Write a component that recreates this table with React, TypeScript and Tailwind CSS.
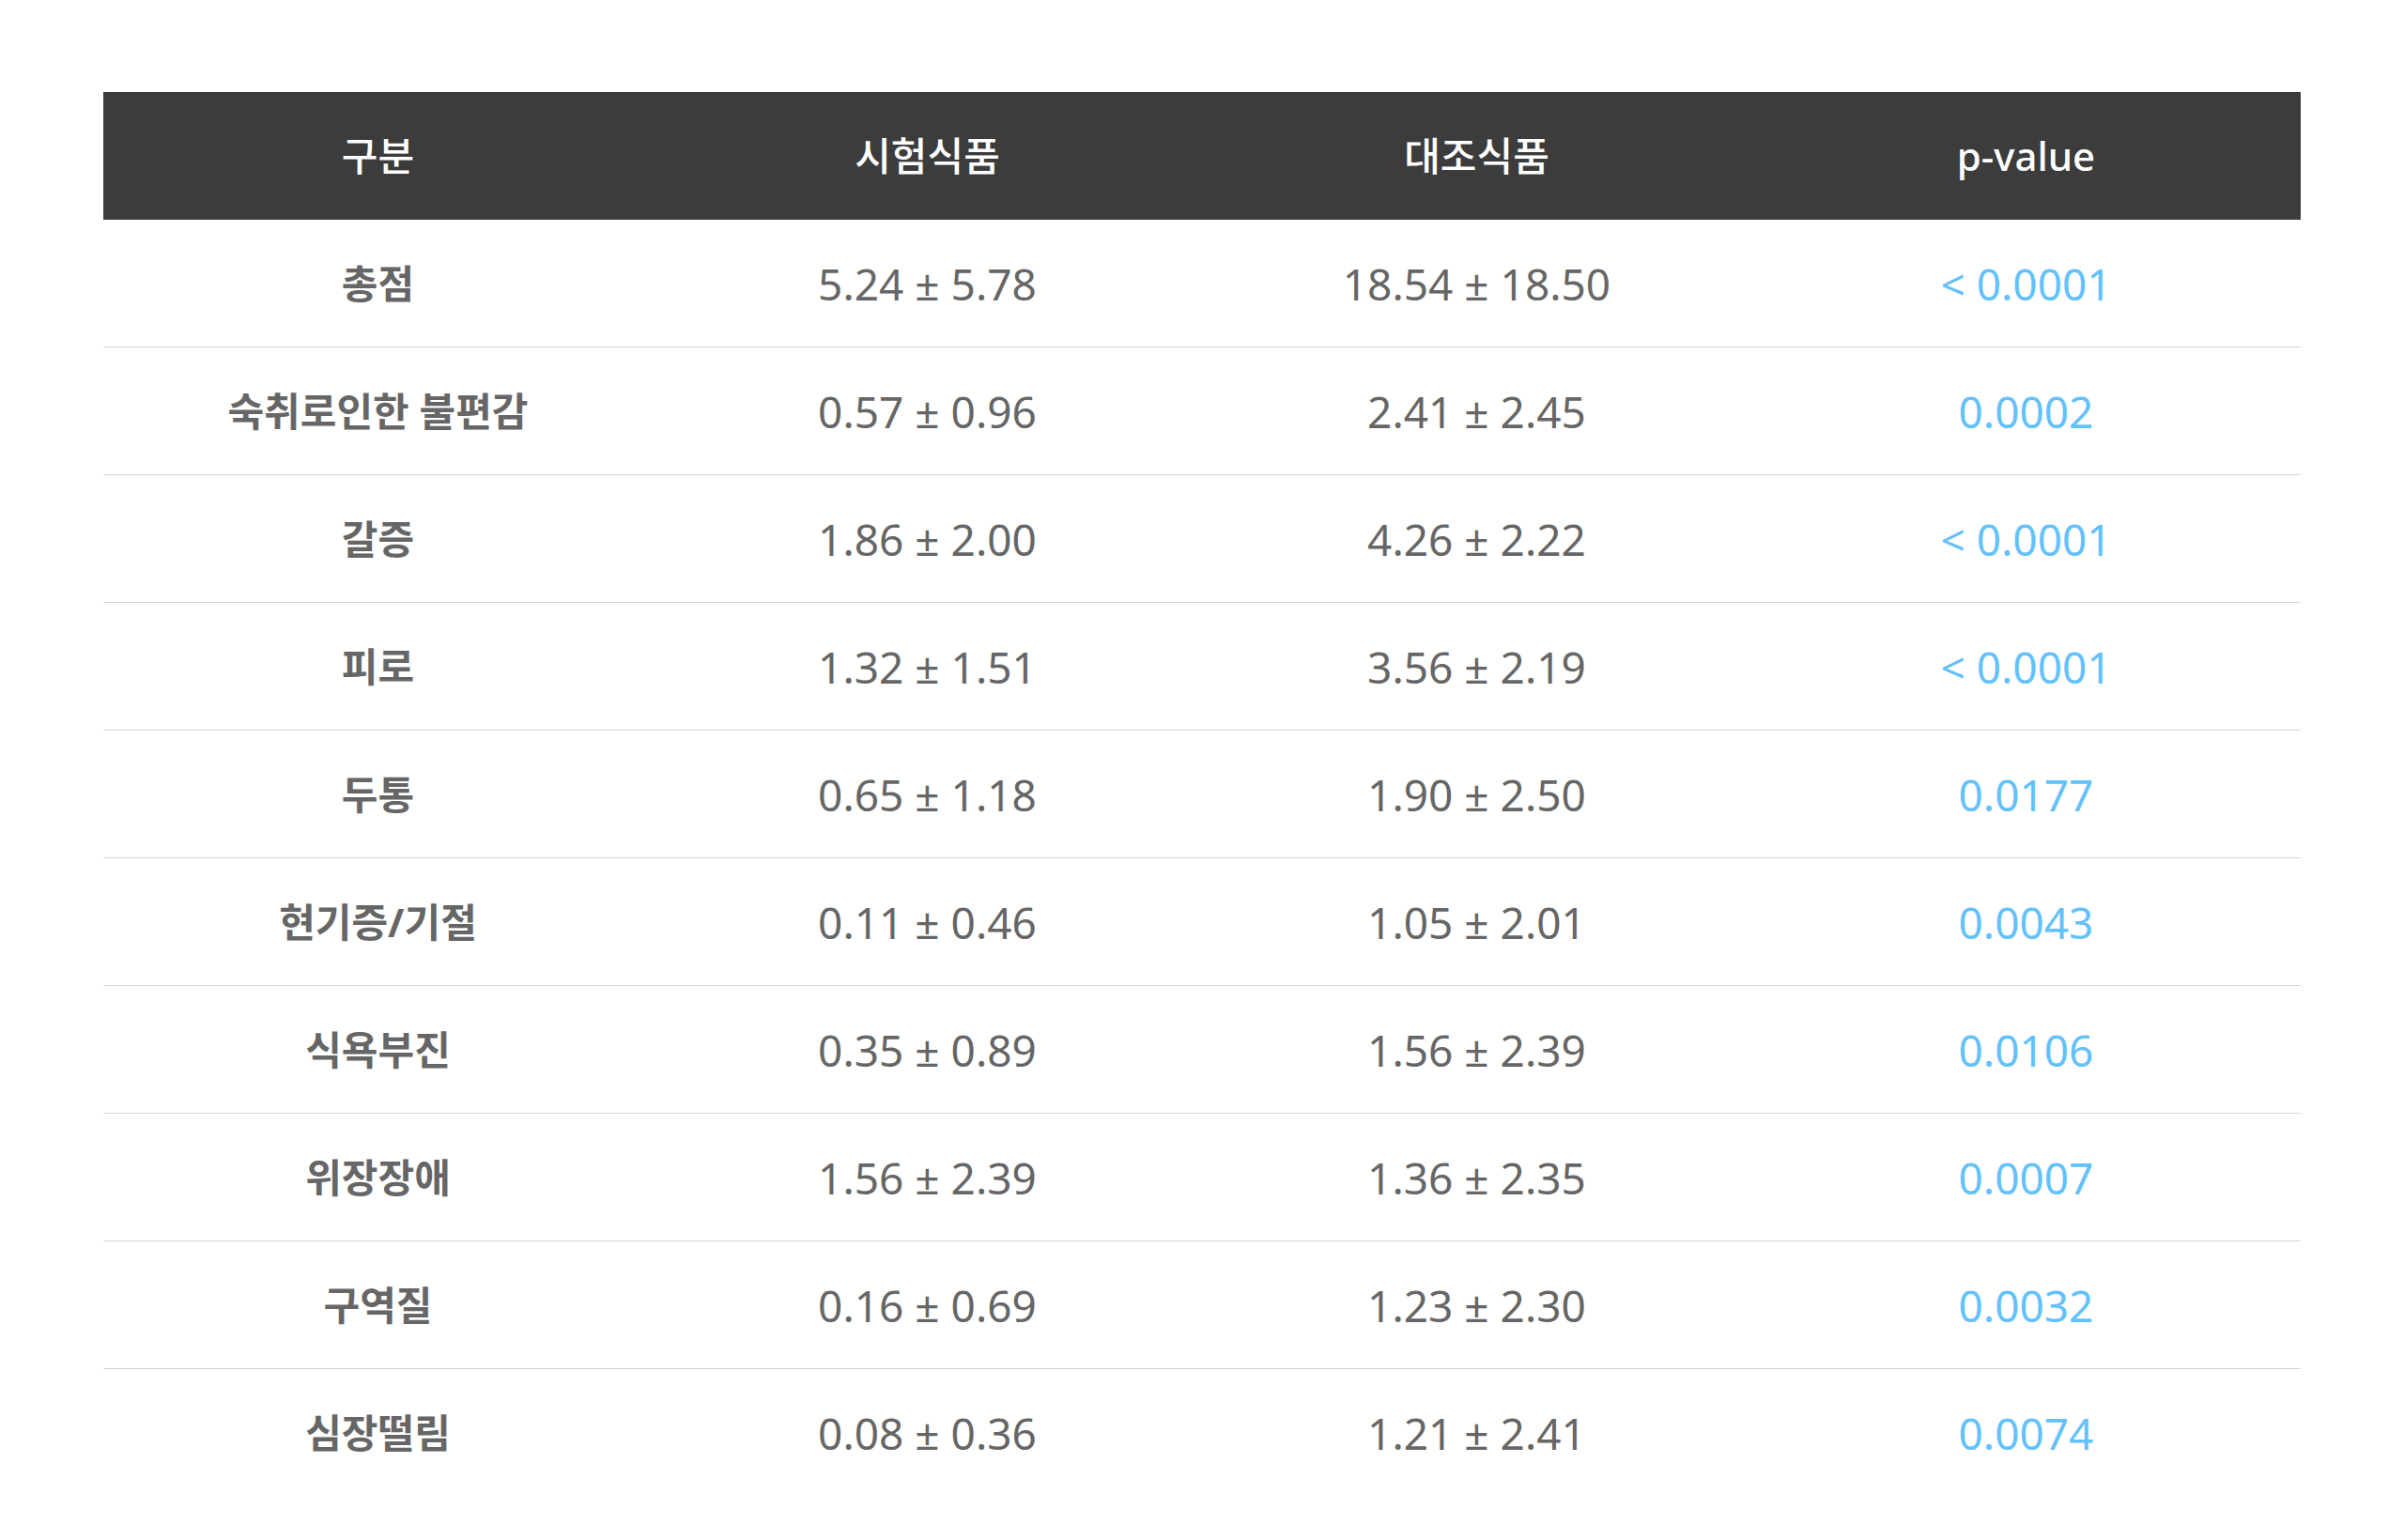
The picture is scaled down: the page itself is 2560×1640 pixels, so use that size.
const rows = [
  { label: '총점', test: '5.24 ± 5.78', control: '18.54 ± 18.50', p: '< 0.0001' },
  { label: '숙취로인한 불편감', test: '0.57 ± 0.96', control: '2.41 ± 2.45', p: '0.0002' },
  { label: '갈증', test: '1.86 ± 2.00', control: '4.26 ± 2.22', p: '< 0.0001' },
  { label: '피로', test: '1.32 ± 1.51', control: '3.56 ± 2.19', p: '< 0.0001' },
  { label: '두통', test: '0.65 ± 1.18', control: '1.90 ± 2.50', p: '0.0177' },
  { label: '현기증/기절', test: '0.11 ± 0.46', control: '1.05 ± 2.01', p: '0.0043' },
  { label: '식욕부진', test: '0.35 ± 0.89', control: '1.56 ± 2.39', p: '0.0106' },
  { label: '위장장애', test: '1.56 ± 2.39', control: '1.36 ± 2.35', p: '0.0007' },
  { label: '구역질', test: '0.16 ± 0.69', control: '1.23 ± 2.30', p: '0.0032' },
  { label: '심장떨림', test: '0.08 ± 0.36', control: '1.21 ± 2.41', p: '0.0074' },
];

const headers = ['구분', '시험식품', '대조식품', 'p-value'];

const App = () => {
  return (
    <div className="min-h-[1640px] w-full bg-white px-[110px] pt-[98px] font-['Noto_Sans','Noto_Sans_CJK_KR',sans-serif]">
      <div className="grid h-[136px] grid-cols-4 items-center bg-[#3c3c3c] text-[42px] font-medium leading-none text-white">
        {headers.map((h) => (
          <div key={h} className="text-center">
            {h}
          </div>
        ))}
      </div>
      {rows.map((r, i) => (
        <div
          key={r.label}
          className={`grid h-[136px] grid-cols-4 items-center text-[46px] leading-none text-[#666666] ${
            i < rows.length - 1 ? 'border-b border-[#d6d6d6]' : ''
          }`}
        >
          <div className="text-center text-[42px] font-bold">{r.label}</div>
          <div className="text-center">{r.test}</div>
          <div className="text-center">{r.control}</div>
          <div className="text-center text-[#63c1fb]">{r.p}</div>
        </div>
      ))}
    </div>
  );
};

export default App;
